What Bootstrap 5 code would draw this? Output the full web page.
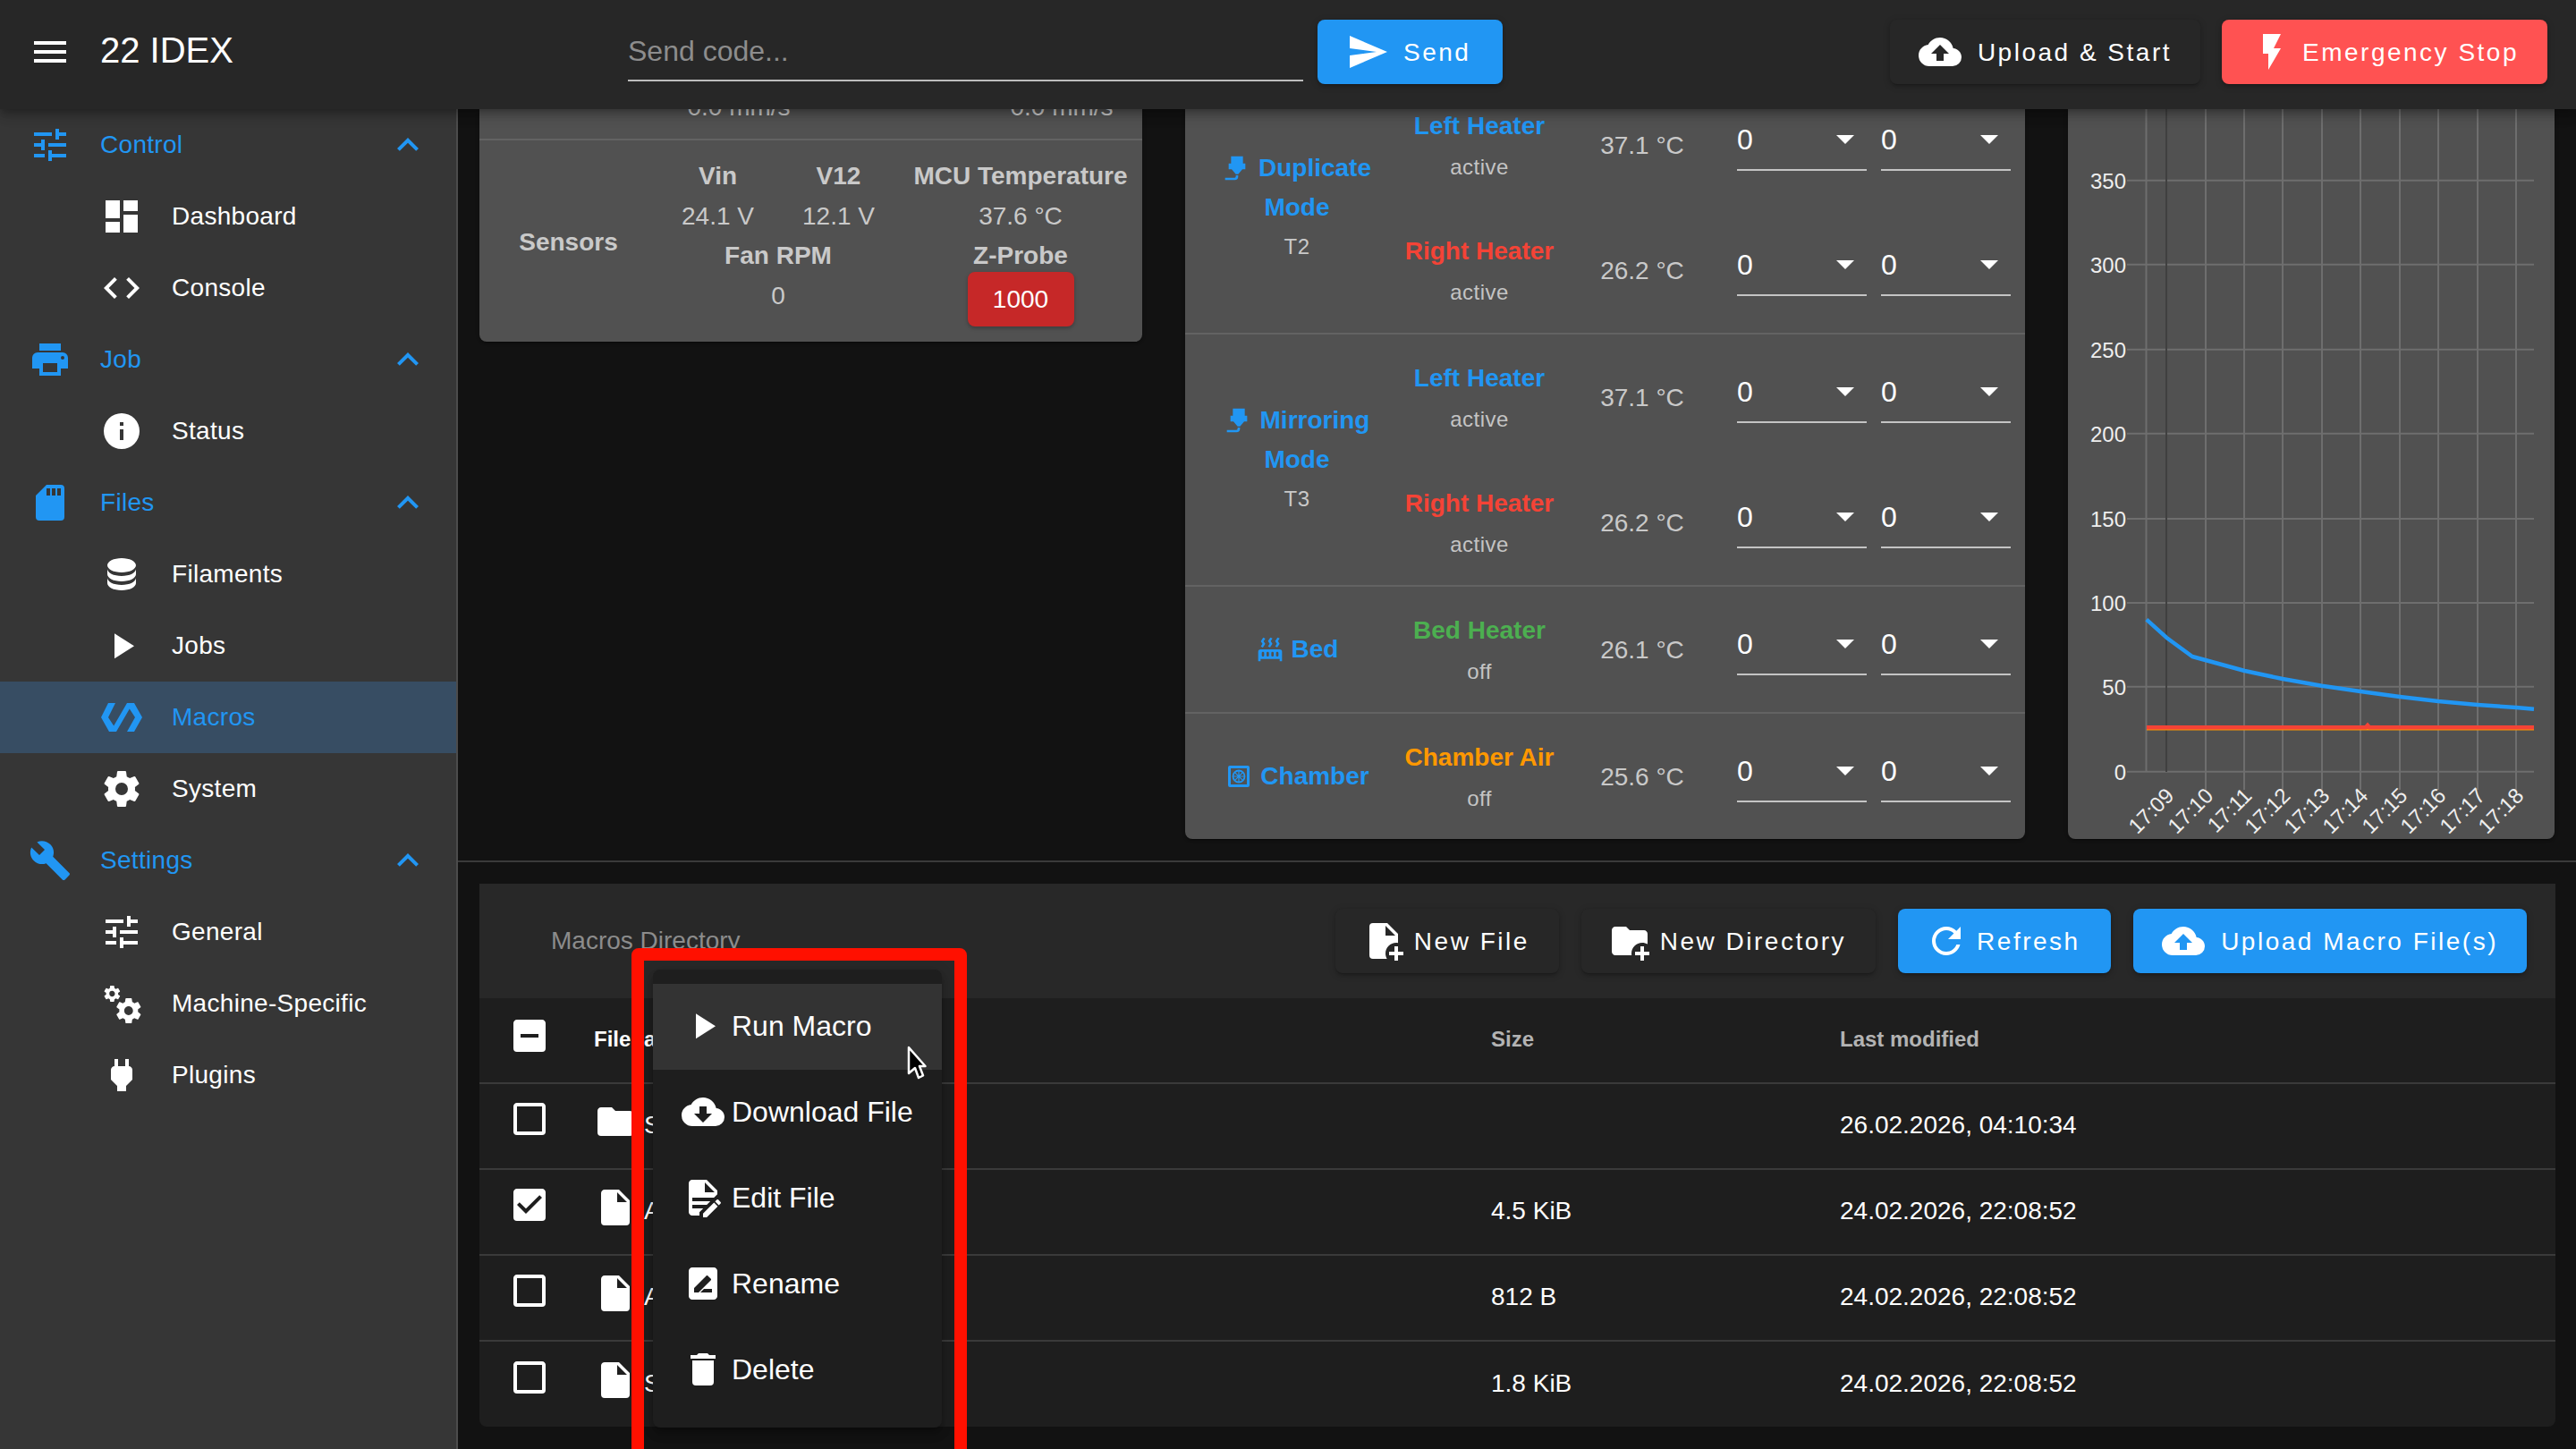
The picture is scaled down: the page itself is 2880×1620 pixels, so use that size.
<!DOCTYPE html>
<html lang="en">
<head>
  <meta charset="UTF-8" />
  <title>22 IDEX</title>
  <link href="https://cdn.jsdelivr.net/npm/bootstrap@5.3.3/dist/css/bootstrap.min.css" rel="stylesheet">
  <style>
    html, body { height: 1620px; overflow: hidden; }
    body { background: #121212; color: #fff; font-family: "Liberation Sans", Arial, sans-serif; font-size: 28px; position: relative; }
    svg.mdi { fill: currentColor; flex: none; width: 48px; height: 48px; display: block; }
    svg.mdi32 { width: 32px; height: 32px; }

    /* top bar */
    .topbar { height: 122px; background: #272727; padding: 22px 32px 0; position: relative; z-index: 5;
      box-shadow: 0 4px 8px -2px rgba(0,0,0,.2), 0 8px 10px rgba(0,0,0,.14), 0 2px 20px rgba(0,0,0,.12); }
    .burger { margin-top: 12px; }
    .brand-name { font-size: 40px; line-height: 68px; width: 590px; margin-left: 32px; }
    .code-input { width: 755px; height: 69px; border: 0; border-bottom: 2px solid #bdbdbd; background: transparent; color: #fff;
      font-size: 32px; padding: 4px 0 0; outline: 0; margin-right: 16px; }
    .code-input::placeholder { color: #8d8d8d; opacity: 1; }
    .app-btn { height: 72px; padding: 2px 32px 0; border: 0; border-radius: 8px; font-size: 28px; letter-spacing: 2.5px; color: #fff;
      display: flex; align-items: center; gap: 16px; background: #272727; white-space: nowrap;
      box-shadow: 0 3px 2px -2px rgba(0,0,0,.2), 0 2px 4px rgba(0,0,0,.14), 0 2px 10px rgba(0,0,0,.12); }
    .app-btn svg.mdi { margin-top: -2px; }
    .app-btn.tight { gap: 10px; padding: 2px 33px 0 30px; }
    .app-btn.refresh-btn { padding-right: 34.5px; }
    .app-btn.send-btn { padding-right: 36px; }
    .app-btn.stop-btn { gap: 10px; }
    .app-btn.upload-btn { gap: 18px; }
    .app-btn:hover { color: #fff; }
    .btn-blue, .btn-blue:hover { background: #2196f3; }
    .btn-red, .btn-red:hover { background: #ff5252; }

    /* sidebar */
    .shell { height: 1498px; }
    .sidebar { width: 512px; background: #363636; border-right: 2px solid #4c4c4c; flex: none; }
    .side-link { height: 80px; padding: 0 30px 0 32px; color: #fff; font-size: 28px; gap: 32px; letter-spacing: .3px; }
    .side-link.grp { color: #2196f3; }
    .side-link.sub { padding-left: 112px; }
    .side-link.sub.now { background: #374d63; color: #2196f3; }
    .side-link:hover { color: inherit; }

    /* main area */
    .upper { height: 840px; padding: 0 24px; gap: 48px; overflow: hidden; }
    .panel { background: #515151; border-radius: 0 0 8px 8px; overflow: hidden; display: flex; flex-direction: column; justify-content: flex-end;
      box-shadow: 0 3px 1px -2px rgba(0,0,0,.2), 0 2px 2px rgba(0,0,0,.14), 0 1px 5px rgba(0,0,0,.12); }
    .panel-speed { width: 741px; height: 260px; color: #c9c9c9; }
    .speed-row { line-height: 44px; padding: 0 0 13px 210px; gap: 201px; flex: none; }
    .speed-row span { width: 160px; text-align: center; }
    .sensor-grid { display: grid; grid-template-columns: 199px 135px 135px 272px; grid-auto-rows: 44.5px; border-top: 2px solid #636363;
      padding: 18px 0 29px; line-height: 44px; text-align: center; flex: none; }
    .sensor-title { grid-row: 1 / 5; align-self: center; font-weight: 700; margin-top: 14px; }
    .sensor-head { font-weight: 700; }
    .probe-chip { width: 119px; height: 61px; line-height: 61px; margin: -5px auto 0; background: #c62828; color: #fff; border-radius: 8px;
      box-shadow: 0 2px 4px rgba(0,0,0,.25); }

    .panel-temps { width: 939px; height: 816px; }
    .tool-row { border-top: 2px solid #636363; flex: none; }
    .tool-row:first-child { border-top: 0; }
    .tool-name { width: 250px; text-align: center; font-weight: 700; color: #2196f3; line-height: 44px; flex: none; }
    .tool-line { gap: 8px; }
    .tool-num { font-weight: 400; font-size: 24px; color: #c9c9c9; letter-spacing: .5px; }
    .heater-row { height: 140px; padding-top: 3px; }
    .heater-name { width: 198px; margin: 0 -20px; text-align: center; line-height: 46px; flex: none; font-weight: 700; white-space: nowrap; }
    .heater-name small { display: block; font-size: 24px; font-weight: 400; color: #c4c4c4; letter-spacing: .5px; }
    .heater-temp { width: 206px; text-align: center; color: #c9c9c9; flex: none; white-space: nowrap; margin-bottom: 2px; }
    .tone-blue { color: #2196f3; } .tone-red { color: #f44336; } .tone-green { color: #4caf50; } .tone-orange { color: #ff9800; }
    .temp-pick { width: 145px; height: 64px; margin: 0 16px 9px 0; margin-left: 3px; border-bottom: 2px solid #c4c4c4; font-size: 32px; line-height: 58px; position: relative; }
    .temp-pick + .temp-pick { margin-left: 0; }
    .temp-pick i { position: absolute; right: 14px; top: 24px; width: 0; height: 0; border-left: 10px solid transparent; border-right: 10px solid transparent; border-top: 10px solid #fff; }

    .panel-chart { width: 544px; height: 816px; }
    .panel-chart svg { display: block; }
    .panel-chart text { font-family: "Liberation Sans", Arial, sans-serif; font-size: 24px; fill: #eeeeee; }

    .lower { border-top: 2px solid #3a3a3a; padding: 24px 23px 0 24px; }
    .dir-head { height: 128px; background: #282828; padding: 28px 32px 0 80px; gap: 25px; }
    .dir-title { color: #8c8c8c; line-height: 72px; margin-right: auto; }
    .macro-box { background: #1e1e1e; border-radius: 0 0 8px 8px; }
    .macro-table { width: 100%; margin: 0; table-layout: fixed; --bs-table-bg: transparent; --bs-table-color: #fff; }
    .macro-table > :not(caption) > * > * { padding: 0 0 2px; background: transparent; color: #fff; border-bottom: 2px solid #3a3a3a; vertical-align: middle; }
    .macro-table tbody tr:last-child td { border-bottom: 0; }
    .macro-table th { font-size: 24px; height: 95px; font-weight: 700; color: #b3b3b3; }
    .macro-table td { height: 96px; }
    .macro-table th.name-head { color: #fff; }
    .macro-table > :not(caption) > * > .chk-cell { padding-left: 32px; color: #fff; }
    .chk-cell svg { margin-bottom: 14px; }
    .macro-table th.chk-cell svg { margin-bottom: 8px; }
    .name-cell svg { margin-bottom: 8px; }
    .name-cell { gap: 8px; }

    /* context menu and the red mark drawn over it */
    .file-menu { position: absolute; left: 730px; top: 1084px; width: 323px; height: 512px; padding: 16px 0; margin: 0; border: 0; border-radius: 8px; background: #1e1e1e; z-index: 6;
      box-shadow: 0 5px 5px -3px rgba(0,0,0,.2), 0 8px 10px 1px rgba(0,0,0,.14), 0 3px 14px 2px rgba(0,0,0,.12); }
    .file-menu .dropdown-item { height: 96px; padding: 0 0 2px 32px; color: #fff; font-size: 32px; gap: 8px; }
    .file-menu .dropdown-item:hover, .file-menu .dropdown-item.hovered { background: #333; color: #fff; }
    .red-mark { position: absolute; left: 706px; top: 1060px; width: 375px; height: 620px; border: 14px solid #ff1000; border-radius: 8px; z-index: 7; pointer-events: none; }
    .mouse-arrow { position: absolute; left: 1013px; top: 1169px; width: 24px; height: 38px; z-index: 8; }
  </style>
</head>
<body>

<svg width="0" height="0" class="position-absolute">
  <symbol id="i-menu" viewBox="0 0 24 24"><path d="M3,6H21V8H3V6M3,11H21V13H3V11M3,16H21V18H3V16Z"/></symbol>
  <symbol id="i-send" viewBox="0 0 24 24"><path d="M2,21L23,12L2,3V10L17,12L2,14V21Z"/></symbol>
  <symbol id="i-upload" viewBox="0 0 24 24"><path d="M14,13V17H10V13H7L12,8L17,13M19.35,10.03C18.67,6.59 15.64,4 12,4C9.11,4 6.6,5.64 5.35,8.03C2.34,8.36 0,10.9 0,14A6,6 0 0,0 6,20H19A5,5 0 0,0 24,15C24,12.36 21.95,10.22 19.35,10.03Z"/></symbol>
  <symbol id="i-flash" viewBox="0 0 24 24"><path d="M7,2V13H10V22L17,10H13L17,2H7Z"/></symbol>
  <symbol id="i-tune" viewBox="0 0 24 24"><path d="M3,17V19H9V17H3M3,5V7H13V5H3M13,21V19H21V17H13V15H11V21H13M7,9V11H3V13H7V15H9V9H7M21,13V11H11V13H21M15,9H17V7H21V5H17V3H15V9Z"/></symbol>
  <symbol id="i-chev" viewBox="0 0 24 24"><path d="M7.41,15.41L12,10.83L16.59,15.41L18,14L12,8L6,14L7.41,15.41Z"/></symbol>
  <symbol id="i-dash" viewBox="0 0 24 24"><path d="M13,3V9H21V3M13,21H21V11H13M3,21H11V15H3M3,13H11V3H3V13Z"/></symbol>
  <symbol id="i-code" viewBox="0 0 24 24"><path d="M14.6,16.6L19.2,12L14.6,7.4L16,6L22,12L16,18L14.6,16.6M9.4,16.6L4.8,12L9.4,7.4L8,6L2,12L8,18L9.4,16.6Z"/></symbol>
  <symbol id="i-printer" viewBox="0 0 24 24"><path d="M18,3H6V7H18M19,12A1,1 0 0,1 18,11A1,1 0 0,1 19,10A1,1 0 0,1 20,11A1,1 0 0,1 19,12M16,19H8V14H16M19,8H5A3,3 0 0,0 2,11V17H6V21H18V17H22V11A3,3 0 0,0 19,8Z"/></symbol>
  <symbol id="i-info" viewBox="0 0 24 24"><path d="M13,9H11V7H13M13,17H11V11H13M12,2A10,10 0 0,0 2,12A10,10 0 0,0 12,22A10,10 0 0,0 22,12A10,10 0 0,0 12,2Z"/></symbol>
  <symbol id="i-sd" viewBox="0 0 24 24"><path d="M18,8H16V4H18M15,8H13V4H15M12,8H10V4H12M18,2H10L4,8V20A2,2 0 0,0 6,22H18A2,2 0 0,0 20,20V4A2,2 0 0,0 18,2Z"/></symbol>
  <symbol id="i-db" viewBox="0 0 24 24"><path d="M12,3C7.58,3 4,4.79 4,7C4,9.21 7.58,11 12,11C16.42,11 20,9.21 20,7C20,4.79 16.42,3 12,3M4,9V12C4,14.21 7.58,16 12,16C16.42,16 20,14.21 20,12V9C20,11.21 16.42,13 12,13C7.58,13 4,11.21 4,9M4,14V17C4,19.21 7.58,21 12,21C16.42,21 20,19.21 20,17V14C20,16.21 16.42,18 12,18C7.58,18 4,16.21 4,14Z"/></symbol>
  <symbol id="i-play" viewBox="0 0 24 24"><path d="M8,5.14V19.14L19,12.14L8,5.14Z"/></symbol>
  <symbol id="i-polymer" viewBox="0 0 24 24"><path d="M19,4H15L7.6,16.8L4.5,12L8.5,4H4.5L0.5,12L5,20H9L16.4,7.2L19.5,12L15,20H19L23.5,12L19,4Z"/></symbol>
  <symbol id="i-cog" viewBox="0 0 24 24"><path d="M12,15.5A3.5,3.5 0 0,1 8.5,12A3.5,3.5 0 0,1 12,8.5A3.5,3.5 0 0,1 15.5,12A3.5,3.5 0 0,1 12,15.5M19.43,12.97C19.47,12.65 19.5,12.33 19.5,12C19.5,11.67 19.47,11.34 19.43,11L21.54,9.37C21.73,9.22 21.78,8.95 21.66,8.73L19.66,5.27C19.54,5.05 19.27,4.96 19.05,5.05L16.56,6.05C16.04,5.66 15.5,5.32 14.87,5.07L14.5,2.42C14.46,2.18 14.25,2 14,2H10C9.75,2 9.54,2.18 9.5,2.42L9.13,5.07C8.5,5.32 7.96,5.66 7.44,6.05L4.95,5.05C4.73,4.96 4.46,5.05 4.34,5.27L2.34,8.73C2.21,8.95 2.27,9.22 2.46,9.37L4.57,11C4.53,11.34 4.5,11.67 4.5,12C4.5,12.33 4.53,12.65 4.57,12.97L2.46,14.63C2.27,14.78 2.21,15.05 2.34,15.27L4.34,18.73C4.46,18.95 4.73,19.03 4.95,18.95L7.44,17.94C7.96,18.34 8.5,18.68 9.13,18.93L9.5,21.58C9.54,21.82 9.75,22 10,22H14C14.25,22 14.46,21.82 14.5,21.58L14.87,18.93C15.5,18.67 16.04,18.34 16.56,17.94L19.05,18.95C19.27,19.03 19.54,18.95 19.66,18.73L21.66,15.27C21.78,15.05 21.73,14.78 21.54,14.63L19.43,12.97Z"/></symbol>
  <symbol id="i-wrench" viewBox="0 0 24 24"><path d="M22.7,19L13.6,9.9C14.5,7.6 14,4.9 12.1,3C10.1,1 7.1,0.6 4.7,1.7L9,6L6,9L1.6,4.7C0.4,7.1 0.9,10.1 2.9,12.1C4.8,14 7.5,14.5 9.8,13.6L18.9,22.7C19.3,23.1 19.9,23.1 20.3,22.7L22.6,20.4C23.1,20 23.1,19.3 22.7,19Z"/></symbol>
  <symbol id="i-cogs" viewBox="0 0 24 24"><path d="M15.9,18.45C17.25,18.45 18.35,17.35 18.35,16C18.35,14.65 17.25,13.55 15.9,13.55C14.54,13.55 13.45,14.65 13.45,16C13.45,17.35 14.54,18.45 15.9,18.45M21.1,16.68L22.58,17.84C22.71,17.95 22.75,18.13 22.66,18.29L21.26,20.71C21.17,20.86 21,20.92 20.83,20.86L19.09,20.16C18.73,20.44 18.34,20.67 17.92,20.85L17.66,22.7C17.63,22.87 17.5,23 17.32,23H14.52C14.34,23 14.2,22.87 14.17,22.7L13.91,20.85C13.49,20.67 13.1,20.44 12.74,20.16L11,20.86C10.83,20.92 10.66,20.86 10.57,20.71L9.17,18.29C9.08,18.13 9.12,17.95 9.25,17.84L10.73,16.68L10.68,16L10.73,15.31L9.25,14.16C9.12,14.05 9.08,13.86 9.17,13.71L10.57,11.29C10.66,11.13 10.83,11.07 11,11.13L12.74,11.84C13.1,11.56 13.49,11.33 13.91,11.15L14.17,9.3C14.2,9.13 14.34,9 14.52,9H17.32C17.5,9 17.63,9.13 17.66,9.3L17.92,11.15C18.34,11.33 18.73,11.56 19.09,11.84L20.83,11.13C21,11.07 21.17,11.13 21.26,11.29L22.66,13.71C22.75,13.86 22.71,14.05 22.58,14.16L21.1,15.31L21.15,16L21.1,16.68M6.69,8.07C7.56,8.07 8.26,7.37 8.26,6.5C8.26,5.63 7.56,4.92 6.69,4.92A1.58,1.58 0 0,0 5.11,6.5C5.11,7.37 5.82,8.07 6.69,8.07M10.03,6.94L11,7.68C11.07,7.75 11.09,7.87 11.03,7.97L10.13,9.53C10.08,9.63 9.96,9.67 9.86,9.63L8.74,9.18L8,9.62L7.81,10.81C7.79,10.92 7.7,11 7.59,11H5.79C5.67,11 5.58,10.92 5.56,10.81L5.4,9.62L4.64,9.18L3.5,9.63C3.41,9.67 3.3,9.63 3.24,9.53L2.34,7.97C2.28,7.87 2.31,7.75 2.39,7.68L3.34,6.94L3.31,6.5L3.34,6.06L2.39,5.32C2.31,5.25 2.28,5.13 2.34,5.03L3.24,3.47C3.3,3.37 3.41,3.33 3.5,3.37L4.63,3.82L5.4,3.38L5.56,2.19C5.58,2.08 5.67,2 5.79,2H7.59C7.7,2 7.79,2.08 7.81,2.19L8,3.38L8.74,3.82L9.86,3.37C9.96,3.33 10.08,3.37 10.13,3.47L11.03,5.03C11.09,5.13 11.07,5.25 11,5.32L10.03,6.06L10.06,6.5L10.03,6.94Z"/></symbol>
  <symbol id="i-plug" viewBox="0 0 24 24"><path d="M16,7V3H14V7H10V3H8V7H8C7,7 6,8 6,9V14.5L9.5,18V21H14.5V18L18,14.5V9C18,8 17,7 16,7Z"/></symbol>
  <symbol id="i-nozzle" viewBox="0 0 24 24"><path d="M7,2H17V8H19V13H16.5L13,17H11L7.5,13H5V8H7V2M10,22H2V20H10A1,1 0 0,0 11,19V18H13V19A3,3 0 0,1 10,22Z"/></symbol>
  <symbol id="i-radiator" viewBox="0 0 24 24"><path d="M7.95,3L6.53,5.19L7.95,7.4H7.94L5.95,10.5L4.22,9.6L5.64,7.39L4.22,5.19L6.22,2.09L7.95,3M13.95,2.89L12.53,5.1L13.95,7.3L13.94,7.31L11.95,10.4L10.22,9.5L11.64,7.3L10.22,5.1L12.22,2L13.95,2.89M20,2.89L18.56,5.1L20,7.3V7.31L18,10.4L16.25,9.5L17.67,7.3L16.25,5.1L18.25,2L20,2.89M2,22V14A2,2 0 0,1 4,12H20A2,2 0 0,1 22,14V22H20V20H4V22H2M6,14A1,1 0 0,0 5,15V17A1,1 0 0,0 6,18A1,1 0 0,0 7,17V15A1,1 0 0,0 6,14M10,14A1,1 0 0,0 9,15V17A1,1 0 0,0 10,18A1,1 0 0,0 11,17V15A1,1 0 0,0 10,14M14,14A1,1 0 0,0 13,15V17A1,1 0 0,0 14,18A1,1 0 0,0 15,17V15A1,1 0 0,0 14,14M18,14A1,1 0 0,0 17,15V17A1,1 0 0,0 18,18A1,1 0 0,0 19,17V15A1,1 0 0,0 18,14Z"/></symbol>
  <symbol id="i-chamber" viewBox="0 0 32 32"><path fill-rule="evenodd" d="M6,4H26A2,2 0 0,1 28,6V26A2,2 0 0,1 26,28H6A2,2 0 0,1 4,26V6A2,2 0 0,1 6,4M7,7V25H25V7H7Z"/><circle cx="16" cy="16" r="6.5" fill="none" stroke="currentColor" stroke-width="1.8"/><path d="M16,10V22M10,16H22M11.8,11.8L20.2,20.2M20.2,11.8L11.8,20.2" stroke="currentColor" stroke-width="1.2"/></symbol>
  <symbol id="i-blank" viewBox="0 0 24 24"><path d="M19,3H5C3.89,3 3,3.89 3,5V19A2,2 0 0,0 5,21H19A2,2 0 0,0 21,19V5C21,3.89 20.1,3 19,3M19,5V19H5V5H19Z"/></symbol>
  <symbol id="i-marked" viewBox="0 0 24 24"><path d="M19,3H5C3.89,3 3,3.89 3,5V19A2,2 0 0,0 5,21H19A2,2 0 0,0 21,19V5C21,3.89 20.1,3 19,3M10,17L5,12L6.41,10.58L10,14.17L17.59,6.58L19,8"/></symbol>
  <symbol id="i-minus" viewBox="0 0 24 24"><path d="M17,13H7V11H17M19,3H5C3.89,3 3,3.89 3,5V19A2,2 0 0,0 5,21H19A2,2 0 0,0 21,19V5C21,3.89 20.1,3 19,3Z"/></symbol>
  <symbol id="i-file" viewBox="0 0 24 24"><path d="M13,9V3.5L18.5,9M6,2C4.89,2 4,2.89 4,4V20A2,2 0 0,0 6,22H18A2,2 0 0,0 20,20V8L14,2H6Z"/></symbol>
  <symbol id="i-folder" viewBox="0 0 24 24"><path d="M10,4H4C2.89,4 2,4.89 2,6V18A2,2 0 0,0 4,20H20A2,2 0 0,0 22,18V8C22,6.89 21.1,6 20,6H12L10,4Z"/></symbol>
  <symbol id="i-file-plus" viewBox="0 0 24 24"><path d="M14,2H6A2,2 0 0,0 4,4V20A2,2 0 0,0 6,22H13.81C13.28,21.09 13,20.05 13,19C13,15.69 15.69,13 19,13C19.34,13 19.67,13.03 20,13.08V8L14,2M13,9V3.5L18.5,9H13M18,15V18H15V20H18V23H20V20H23V18H20V15H18Z"/></symbol>
  <symbol id="i-folder-plus" viewBox="0 0 24 24"><path d="M13,19C13,19.34 13.04,19.67 13.09,20H4C2.9,20 2,19.11 2,18V6C2,4.89 2.89,4 4,4H10L12,6H20C21.1,6 22,6.89 22,8V13.81C21.12,13.3 20.1,13 19,13C15.69,13 13,15.69 13,19M20,18V15H18V18H15V20H18V23H20V20H23V18H20Z"/></symbol>
  <symbol id="i-refresh" viewBox="0 0 24 24"><path d="M17.65,6.35C16.2,4.9 14.21,4 12,4A8,8 0 0,0 4,12A8,8 0 0,0 12,20C15.73,20 18.84,17.45 19.73,14H17.65C16.83,16.33 14.61,18 12,18A6,6 0 0,1 6,12A6,6 0 0,1 12,6C13.66,6 15.14,6.69 16.22,7.78L13,11H20V4L17.65,6.35Z"/></symbol>
  <symbol id="i-download" viewBox="0 0 24 24"><path d="M17,13L12,18L7,13H10V9H14V13M19.35,10.03C18.67,6.59 15.64,4 12,4C9.11,4 6.6,5.64 5.35,8.03C2.34,8.36 0,10.9 0,14A6,6 0 0,0 6,20H19A5,5 0 0,0 24,15C24,12.36 21.95,10.22 19.35,10.03Z"/></symbol>
  <symbol id="i-edit" viewBox="0 0 24 24"><path d="M6,2C4.89,2 4,2.9 4,4V20C4,21.11 4.89,22 6,22H10V20.09L12.09,18H6V16H14.09L16.09,14H6V12H18.09L20,10.09V8L14,2H6M13,3.5L18.5,9H13V3.5M20.15,13C20,13 19.86,13.05 19.75,13.16L18.73,14.18L20.82,16.26L21.84,15.25C22.05,15.03 22.05,14.67 21.84,14.46L20.54,13.16C20.43,13.05 20.29,13 20.15,13M18.14,14.77L12,20.92V23H14.08L20.23,16.85L18.14,14.77Z"/></symbol>
  <symbol id="i-rename" viewBox="0 0 24 24"><path fill-rule="evenodd" d="M18,3C19.1,3 20,3.9 20,5V19C20,20.1 19.1,21 18,21H6C4.9,21 4,20.1 4,19V5C4,3.9 4.9,3 6,3H18M17,17H10.5L12.5,15H17V17M7,17V14.5L13.9,7.6C14.1,7.4 14.4,7.4 14.6,7.6L16.4,9.4C16.6,9.6 16.6,9.9 16.4,10.1L9.5,17H7Z"/></symbol>
  <symbol id="i-delete" viewBox="0 0 24 24"><path d="M19,4H15.5L14.5,3H9.5L8.5,4H5V6H19M6,19A2,2 0 0,0 8,21H16A2,2 0 0,0 18,19V7H6V19Z"/></symbol>
</svg>

<header class="topbar d-flex align-items-start">
  <svg class="mdi burger"><use href="#i-menu"/></svg>
  <div class="brand-name">22 IDEX</div>
  <input class="code-input" type="text" placeholder="Send code...">
  <button class="btn app-btn send-btn btn-blue"><svg class="mdi"><use href="#i-send"/></svg>Send</button>
  <button class="btn app-btn upload-btn ms-auto me-4"><svg class="mdi"><use href="#i-upload"/></svg>Upload &amp; Start</button>
  <button class="btn app-btn stop-btn btn-red"><svg class="mdi"><use href="#i-flash"/></svg>Emergency Stop</button>
</header>

<div class="shell d-flex">
  <aside class="sidebar">
    <nav class="nav flex-column">
      <a class="nav-link side-link grp d-flex align-items-center" href="#"><svg class="mdi"><use href="#i-tune"/></svg>Control<svg class="mdi ms-auto"><use href="#i-chev"/></svg></a>
      <a class="nav-link side-link sub d-flex align-items-center" href="#"><svg class="mdi"><use href="#i-dash"/></svg>Dashboard</a>
      <a class="nav-link side-link sub d-flex align-items-center" href="#"><svg class="mdi"><use href="#i-code"/></svg>Console</a>
      <a class="nav-link side-link grp d-flex align-items-center" href="#"><svg class="mdi"><use href="#i-printer"/></svg>Job<svg class="mdi ms-auto"><use href="#i-chev"/></svg></a>
      <a class="nav-link side-link sub d-flex align-items-center" href="#"><svg class="mdi"><use href="#i-info"/></svg>Status</a>
      <a class="nav-link side-link grp d-flex align-items-center" href="#"><svg class="mdi"><use href="#i-sd"/></svg>Files<svg class="mdi ms-auto"><use href="#i-chev"/></svg></a>
      <a class="nav-link side-link sub d-flex align-items-center" href="#"><svg class="mdi"><use href="#i-db"/></svg>Filaments</a>
      <a class="nav-link side-link sub d-flex align-items-center" href="#"><svg class="mdi"><use href="#i-play"/></svg>Jobs</a>
      <a class="nav-link side-link sub now d-flex align-items-center" href="#"><svg class="mdi"><use href="#i-polymer"/></svg>Macros</a>
      <a class="nav-link side-link sub d-flex align-items-center" href="#"><svg class="mdi"><use href="#i-cog"/></svg>System</a>
      <a class="nav-link side-link grp d-flex align-items-center" href="#"><svg class="mdi"><use href="#i-wrench"/></svg>Settings<svg class="mdi ms-auto"><use href="#i-chev"/></svg></a>
      <a class="nav-link side-link sub d-flex align-items-center" href="#"><svg class="mdi"><use href="#i-tune"/></svg>General</a>
      <a class="nav-link side-link sub d-flex align-items-center" href="#"><svg class="mdi"><use href="#i-cogs"/></svg>Machine-Specific</a>
      <a class="nav-link side-link sub d-flex align-items-center" href="#"><svg class="mdi"><use href="#i-plug"/></svg>Plugins</a>
    </nav>
  </aside>

  <main class="flex-grow-1">
    <section class="upper d-flex align-items-start">
      <div class="panel panel-speed">
        <div class="speed-row d-flex"><span>0.0 mm/s</span><span>0.0 mm/s</span></div>
        <div class="sensor-grid">
          <div class="sensor-title">Sensors</div>
          <div class="sensor-head">Vin</div>
          <div class="sensor-head">V12</div>
          <div class="sensor-head">MCU Temperature</div>
          <div>24.1 V</div>
          <div>12.1 V</div>
          <div>37.6 °C</div>
          <div class="sensor-head" style="grid-column: span 2">Fan RPM</div>
          <div class="sensor-head">Z-Probe</div>
          <div style="grid-column: span 2">0</div>
          <div><div class="probe-chip">1000</div></div>
        </div>
      </div>

      <div class="panel panel-temps">
        <div class="tool-row d-flex align-items-center">
          <div class="tool-name">
            <div class="tool-line d-flex justify-content-center align-items-center"><svg class="mdi mdi32"><use href="#i-nozzle"/></svg>Duplicate</div>
            <div>Mode</div>
            <div class="tool-num">T2</div>
          </div>
          <div class="flex-grow-1">
            <div class="heater-row d-flex align-items-center">
              <div class="heater-name tone-blue">Left Heater<small>active</small></div>
              <div class="heater-temp">37.1 °C</div>
              <div class="temp-pick">0<i></i></div><div class="temp-pick">0<i></i></div>
            </div>
            <div class="heater-row d-flex align-items-center">
              <div class="heater-name tone-red">Right Heater<small>active</small></div>
              <div class="heater-temp">26.2 °C</div>
              <div class="temp-pick">0<i></i></div><div class="temp-pick">0<i></i></div>
            </div>
          </div>
        </div>
        <div class="tool-row d-flex align-items-center">
          <div class="tool-name">
            <div class="tool-line d-flex justify-content-center align-items-center"><svg class="mdi mdi32"><use href="#i-nozzle"/></svg>Mirroring</div>
            <div>Mode</div>
            <div class="tool-num">T3</div>
          </div>
          <div class="flex-grow-1">
            <div class="heater-row d-flex align-items-center">
              <div class="heater-name tone-blue">Left Heater<small>active</small></div>
              <div class="heater-temp">37.1 °C</div>
              <div class="temp-pick">0<i></i></div><div class="temp-pick">0<i></i></div>
            </div>
            <div class="heater-row d-flex align-items-center">
              <div class="heater-name tone-red">Right Heater<small>active</small></div>
              <div class="heater-temp">26.2 °C</div>
              <div class="temp-pick">0<i></i></div><div class="temp-pick">0<i></i></div>
            </div>
          </div>
        </div>
        <div class="tool-row d-flex align-items-center">
          <div class="tool-name"><div class="tool-line d-flex justify-content-center align-items-center"><svg class="mdi mdi32"><use href="#i-radiator"/></svg>Bed</div></div>
          <div class="heater-row d-flex align-items-center">
            <div class="heater-name tone-green">Bed Heater<small>off</small></div>
            <div class="heater-temp">26.1 °C</div>
            <div class="temp-pick">0<i></i></div><div class="temp-pick">0<i></i></div>
          </div>
        </div>
        <div class="tool-row d-flex align-items-center">
          <div class="tool-name"><div class="tool-line d-flex justify-content-center align-items-center"><svg class="mdi mdi32"><use href="#i-chamber"/></svg>Chamber</div></div>
          <div class="heater-row d-flex align-items-center">
            <div class="heater-name tone-orange">Chamber Air<small>off</small></div>
            <div class="heater-temp">25.6 °C</div>
            <div class="temp-pick">0<i></i></div><div class="temp-pick">0<i></i></div>
          </div>
        </div>
      </div>

      <div class="panel panel-chart">
        <svg id="temp-chart" width="544" height="816" viewBox="2312 122 544 816"></svg>
      </div>
    </section>

    <section class="lower">
      <div class="dir-head d-flex align-items-start">
        <div class="dir-title">Macros Directory</div>
        <button class="btn app-btn tight"><svg class="mdi"><use href="#i-file-plus"/></svg>New File</button>
        <button class="btn app-btn tight"><svg class="mdi"><use href="#i-folder-plus"/></svg>New Directory</button>
        <button class="btn app-btn tight refresh-btn btn-blue"><svg class="mdi"><use href="#i-refresh"/></svg>Refresh</button>
        <button class="btn app-btn upload-btn btn-blue"><svg class="mdi"><use href="#i-upload"/></svg>Upload Macro File(s)</button>
      </div>
      <div class="macro-box">
        <table class="table macro-table">
          <colgroup><col style="width:128px"><col style="width:1003px"><col style="width:390px"><col></colgroup>
          <thead>
            <tr><th class="chk-cell"><svg class="mdi"><use href="#i-minus"/></svg></th><th class="name-head">Filename</th><th>Size</th><th>Last modified</th></tr>
          </thead>
          <tbody>
            <tr>
              <td class="chk-cell"><svg class="mdi"><use href="#i-blank"/></svg></td>
              <td><div class="name-cell d-flex align-items-center"><svg class="mdi"><use href="#i-folder"/></svg>S</div></td>
              <td></td><td>26.02.2026, 04:10:34</td>
            </tr>
            <tr>
              <td class="chk-cell"><svg class="mdi"><use href="#i-marked"/></svg></td>
              <td><div class="name-cell d-flex align-items-center"><svg class="mdi"><use href="#i-file"/></svg>A</div></td>
              <td>4.5 KiB</td><td>24.02.2026, 22:08:52</td>
            </tr>
            <tr>
              <td class="chk-cell"><svg class="mdi"><use href="#i-blank"/></svg></td>
              <td><div class="name-cell d-flex align-items-center"><svg class="mdi"><use href="#i-file"/></svg>A</div></td>
              <td>812 B</td><td>24.02.2026, 22:08:52</td>
            </tr>
            <tr>
              <td class="chk-cell"><svg class="mdi"><use href="#i-blank"/></svg></td>
              <td><div class="name-cell d-flex align-items-center"><svg class="mdi"><use href="#i-file"/></svg>S</div></td>
              <td>1.8 KiB</td><td>24.02.2026, 22:08:52</td>
            </tr>
          </tbody>
        </table>
      </div>
    </section>
  </main>
</div>

<div class="dropdown-menu show file-menu">
  <a class="dropdown-item hovered d-flex align-items-center" href="#"><svg class="mdi"><use href="#i-play"/></svg>Run Macro</a>
  <a class="dropdown-item d-flex align-items-center" href="#"><svg class="mdi"><use href="#i-download"/></svg>Download File</a>
  <a class="dropdown-item d-flex align-items-center" href="#"><svg class="mdi"><use href="#i-edit"/></svg>Edit File</a>
  <a class="dropdown-item d-flex align-items-center" href="#"><svg class="mdi"><use href="#i-rename"/></svg>Rename</a>
  <a class="dropdown-item d-flex align-items-center" href="#"><svg class="mdi"><use href="#i-delete"/></svg>Delete</a>
</div>
<div class="red-mark"></div>
<svg class="mouse-arrow" viewBox="0 0 24 38"><path d="M3,2V31L10,25L14,36L19,33.5L15,23H21.5Z" fill="#000" stroke="#fff" stroke-width="2.5" stroke-linejoin="round"/></svg>

<script>
// temperature chart, coordinates are page pixels (see the viewBox)
const chart = document.getElementById('temp-chart');
let out = '';
const yTicks = { 350: 201.8, 300: 295.8, 250: 390.8, 200: 484.8, 150: 580, 100: 674, 50: 767.7, 0: 862.7 };
const xTicks = [2466, 2509, 2552, 2596, 2639, 2683, 2726, 2770, 2813];
const xNames = ['17:10', '17:11', '17:12', '17:13', '17:14', '17:15', '17:16', '17:17', '17:18'];

for (const v in yTicks) {
  out += `<line x1="2378" x2="2833" y1="${yTicks[v]}" y2="${yTicks[v]}" stroke="#6e6e6e" stroke-width="2"/>`;
  out += `<text x="2377" y="${yTicks[v] + 9}" text-anchor="end">${v}</text>`;
}
out += `<line x1="2399.5" x2="2399.5" y1="122" y2="863" stroke="#6e6e6e" stroke-width="2"/>`;
out += `<line x1="2422" x2="2422" y1="122" y2="863" stroke="#404040" stroke-width="2"/>`;
xTicks.forEach(x => {
  out += `<line x1="${x}" x2="${x}" y1="122" y2="883" stroke="#6e6e6e" stroke-width="2"/>`;
});
[2422].concat(xTicks).forEach((x, i) => {
  const name = i === 0 ? '17:09' : xNames[i - 1];
  out += `<text transform="translate(${x + 10} 891) rotate(-45)" text-anchor="end">${name}</text>`;
});
out += `<polyline fill="none" stroke="#ff9800" stroke-width="2" points="2400,815.5 2833,815.5"/>`;
out += `<polyline fill="none" stroke="#f44336" stroke-width="4.5" points="2400,813.3 2645,813.3 2647,811 2649,813.3 2833,813.3"/>`;
out += `<polyline fill="none" stroke="#2196f3" stroke-width="4.5" stroke-linejoin="round" points="2399.8,692.7 2422,712.7 2451,734 2509.6,750 2552,759 2595.7,766.7 2639,773 2659,775.7 2683,779 2726,784 2770,788 2813,791 2833,792.7"/>`;
chart.innerHTML = out;
</script>

<script src="https://cdn.jsdelivr.net/npm/bootstrap@5.3.3/dist/js/bootstrap.bundle.min.js"></script>
</body>
</html>
